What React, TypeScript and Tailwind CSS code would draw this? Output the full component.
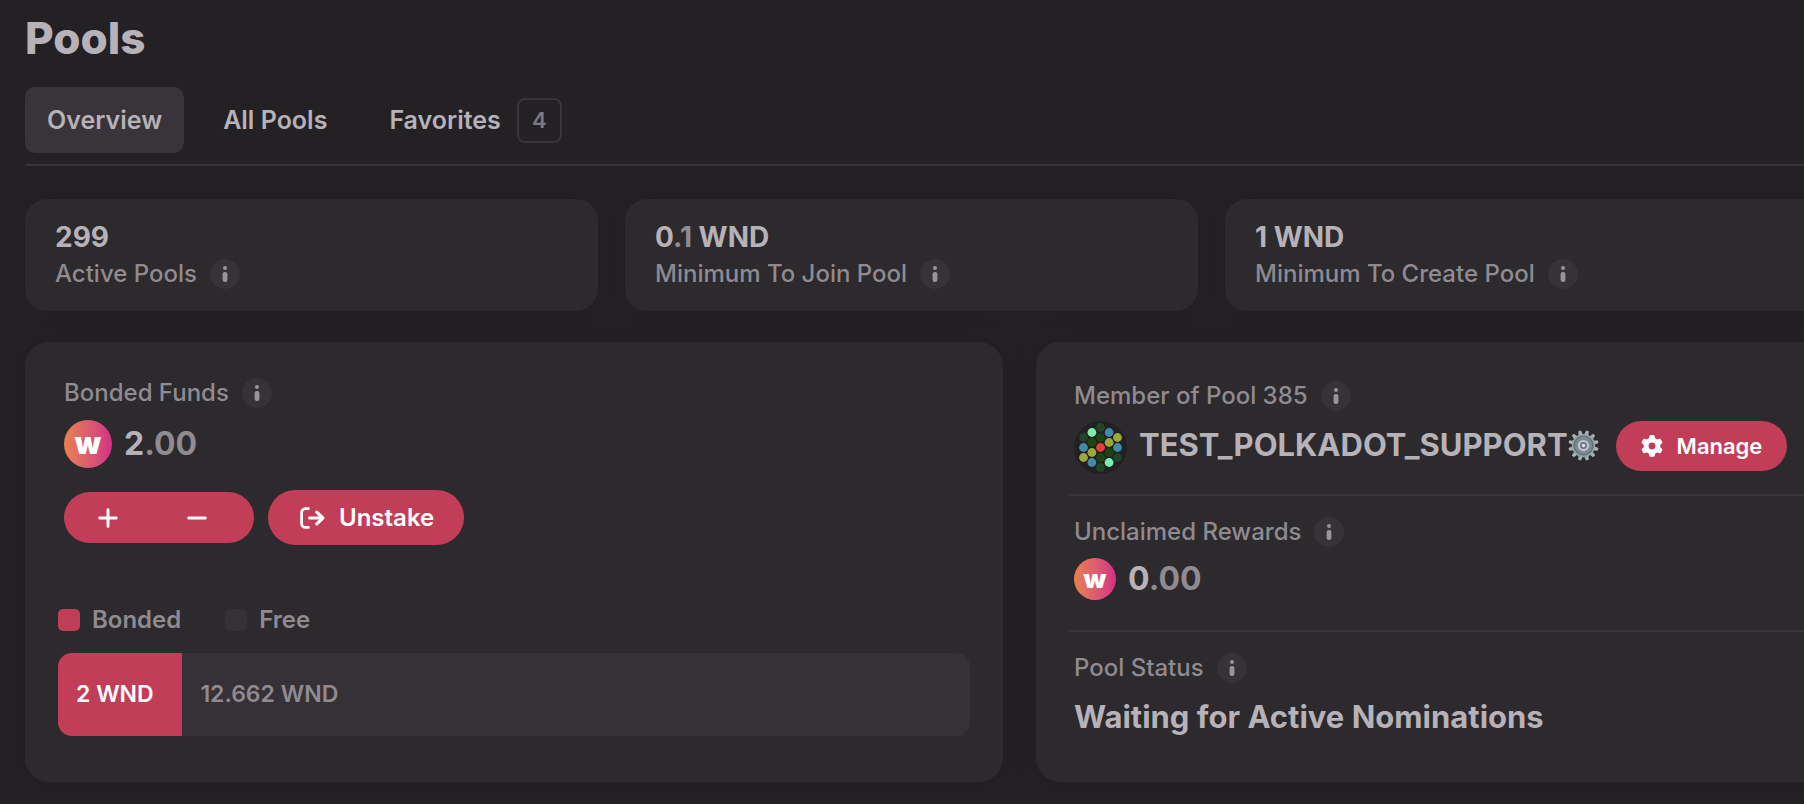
import { FaGear, FaMinus, FaPlus } from "react-icons/fa6";

const bonded = 2;
const free = 12.662;

const stats = [
  { whole: "299", decimals: "", unit: "", label: "Active Pools" },
  { whole: "0", decimals: ".1", unit: " WND", label: "Minimum To Join Pool" },
  { whole: "1", decimals: "", unit: " WND", label: "Minimum To Create Pool" },
];

const identiconDots = [
  [-17, -10, "#204527"],
  [-17, 0, "#4389a9"],
  [-17, 10, "#9ea838"],
  [-8.6, -15, "#78f0ac"],
  [-8.6, -5, "#1e4511"],
  [-8.6, 5, "#9ea838"],
  [-8.6, 15, "#4389a9"],
  [0, -20, "#204527"],
  [0, -10, "#1e4511"],
  [0, 0, "#e63c3c"],
  [0, 10, "#1e4511"],
  [0, 20, "#204527"],
  [8.6, -15, "#4389a9"],
  [8.6, -5, "#9ea838"],
  [8.6, 5, "#1e4511"],
  [8.6, 15, "#78f0ac"],
  [17, -10, "#9ea838"],
  [17, 0, "#4389a9"],
  [17, 10, "#204527"],
] as const;

const gearTeeth = [15, 45, 75, 105, 135, 165, 195, 225, 255, 285, 315, 345];

function InfoButton({ label }: { label: string }) {
  return (
    <button
      type="button"
      aria-label={`About ${label}`}
      className="flex size-[30px] shrink-0 items-center justify-center rounded-full bg-[#373238] text-[#98949b]"
    >
      <svg className="h-4 w-[6px]" viewBox="0 0 6 16" fill="currentColor">
        <circle cx="3" cy="2" r="2" />
        <rect x="0.6" y="6" width="4.8" height="10" rx="2.2" />
      </svg>
    </button>
  );
}

function Label({ text }: { text: string }) {
  return (
    <div className="flex items-center gap-[13px]">
      <h4 className="text-2xl leading-[30px] font-[550] text-[#8f8b91]">{text}</h4>
      <InfoButton label={text} />
    </div>
  );
}

function TokenLogo({ className }: { className: string }) {
  return (
    <span
      className={`flex shrink-0 items-center justify-center rounded-full bg-linear-to-r from-[#e8804f] to-[#d22f83] pb-[2px] font-black text-white ${className}`}
    >
      w
    </span>
  );
}

function Identicon() {
  return (
    <svg className="size-[53px] shrink-0" viewBox="-26.5 -26.5 53 53">
      <circle r="26.5" fill="#222023" />
      {identiconDots.map(([x, y, fill]) => (
        <circle key={`${x},${y}`} cx={x} cy={y} r="4.4" fill={fill} />
      ))}
    </svg>
  );
}

function SteelGear() {
  return (
    <svg className="size-[31px] shrink-0" viewBox="-16 -16 32 32">
      {gearTeeth.map((angle) => (
        <path key={angle} d="M-2.2 -11 L-1.5 -15.6 H1.5 L2.2 -11 Z" fill="#a3b1bb" transform={`rotate(${angle})`} />
      ))}
      <circle r="12" fill="#95a2ac" />
      <circle r="10.4" fill="#5f6a73" />
      <circle r="9.2" fill="#7d8891" />
      <circle r="5.8" fill="#bcc9d2" />
      <circle r="3.6" fill="#6b7680" />
      <circle r="1.7" fill="#dbe4ea" />
    </svg>
  );
}

function LeaveIcon() {
  return (
    <svg
      className="h-[22px] w-[25px] shrink-0"
      viewBox="0 0 25 22"
      fill="none"
      stroke="currentColor"
      strokeWidth="2.8"
      strokeLinecap="round"
      strokeLinejoin="round"
    >
      <path d="M8.4 1.6H5.6a4 4 0 0 0-4 4v10.8a4 4 0 0 0 4 4h2.8" />
      <path d="M9.4 11h13" />
      <path d="M16.8 5.2 22.8 11l-6 5.8" strokeWidth="3.2" />
    </svg>
  );
}

export default function App() {
  return (
    <main className="min-h-screen overflow-x-hidden bg-[#232124] pl-[25px] font-['Inter',sans-serif] text-[#b6b2b8]">
      {/* HEADER */}
      <h1 className="pt-[11px] text-[44px] leading-[55px] font-extrabold">Pools</h1>
      <nav className="mt-[21px] flex items-center gap-4 border-b-2 border-[#38353a] pb-[11px] text-[25px] font-semibold">
        <button type="button" className="h-[66px] rounded-[10px] bg-[#39343a] px-[22px] pt-[2px]">
          Overview
        </button>
        <button type="button" className="h-[66px] px-[23px] pt-[2px]">
          All Pools
        </button>
        <button type="button" className="flex h-[66px] items-center gap-4 px-[23px]">
          <span className="pt-[2px]">Favorites</span>
          <span className="flex size-[45px] items-center justify-center rounded-lg border-2 border-[#38353a] text-[22px] font-semibold text-[#7d797f]">
            4
          </span>
        </button>
      </nav>

      {/* STATS */}
      <section className="mt-[33px] -mr-8 flex gap-[27px]">
        {stats.map((stat) => (
          <div
            key={stat.label}
            className="min-w-0 shrink-0 basis-[573px] rounded-[22px] bg-[#2c2a2d] px-[30px] pt-[21px] pb-[22px] shadow-[0_0_20px_rgba(0,0,0,0.08)] last:grow"
          >
            <h3 className="text-[28px] leading-[34px] font-[650]">
              {stat.whole}
              <span className="text-[#8f8b91]">{stat.decimals}</span>
              {stat.unit}
            </h3>
            <div className="mt-[5px]">
              <Label text={stat.label} />
            </div>
          </div>
        ))}
      </section>

      {/* CARDS */}
      <section className="mt-[31px] -mr-8 grid grid-cols-[978fr_800fr] gap-[33px] pb-[22px]">
        <div className="flex flex-col rounded-3xl bg-[#2c2a2d] px-[33px] pt-9 pb-[46px] shadow-[0_0_28px_rgba(0,0,0,0.12)]">
          <div className="px-[6px]">
            <Label text="Bonded Funds" />
            <div className="mt-3 flex items-center gap-3">
              <TokenLogo className="size-12 text-[30px]" />
              <h2 className="text-[32px] leading-[48px] font-bold">
                2<span className="text-[#8f8b91]">.00</span>
              </h2>
            </div>
            <div className="mt-[22px] flex items-center gap-[14px] text-white">
              <div className="flex h-[51px] w-[190px] rounded-full bg-[#c23d58]">
                <button type="button" aria-label="Bond more" className="flex w-[88px] items-center justify-center">
                  <FaPlus className="size-6" />
                </button>
                <button type="button" aria-label="Unbond" className="flex w-[90px] items-center justify-center">
                  <FaMinus className="size-6" />
                </button>
              </div>
              <button
                type="button"
                className="flex h-[55px] items-center gap-[14px] rounded-full bg-[#c23d58] pr-[30px] pl-8 text-2xl font-semibold"
              >
                <LeaveIcon />
                Unstake
              </button>
            </div>
          </div>

          <div className="mt-[60px] flex gap-[44px] text-2xl leading-[30px] font-semibold text-[#8f8b91]">
            <div className="flex items-center gap-3">
              <span className="size-[22px] rounded-[5px] bg-[#c23d58]"></span>
              Bonded
            </div>
            <div className="flex items-center gap-3">
              <span className="size-[22px] rounded-[5px] bg-[#363136]"></span>
              Free
            </div>
          </div>
          <div className="mt-[18px] flex h-[83px] overflow-hidden rounded-[14px] bg-[#363136] text-[23px] font-semibold">
            <div
              className="flex items-center bg-[#c23d58] pl-[18px] whitespace-nowrap text-white"
              style={{ width: `${(bonded / (bonded + free)) * 100}%` }}
            >
              {bonded} WND
            </div>
            <div className="flex items-center pl-[18px] text-[#8f8b91]">{free} WND</div>
          </div>
        </div>

        <div className="rounded-3xl bg-[#2c2a2d] py-[18px] pl-[33px] shadow-[0_0_28px_rgba(0,0,0,0.12)]">
          <div className="h-[136px] border-b-2 border-[#38353a] pt-[21px] pl-[5px]">
            <Label text="Member of Pool 385" />
            <div className="mt-[10px] flex items-start">
              <Identicon />
              <h2 className="ml-3 flex items-center text-[31px] leading-[48px] font-[650]">
                TEST_POLKADOT_SUPPORT
                <SteelGear />
              </h2>
              <button
                type="button"
                className="ml-[17px] flex h-[50px] items-center gap-[14px] rounded-full bg-[#c23d58] px-[25px] text-[22px] font-semibold text-white"
              >
                <FaGear className="size-[22px]" />
                Manage
              </button>
            </div>
          </div>
          <div className="h-[136px] border-b-2 border-[#38353a] pt-[21px] pl-[5px]">
            <Label text="Unclaimed Rewards" />
            <div className="mt-2 flex items-center gap-3">
              <TokenLogo className="size-[42px] text-[26px]" />
              <h2 className="text-[32px] leading-[48px] font-bold">
                0<span className="text-[#8f8b91]">.00</span>
              </h2>
            </div>
          </div>
          <div className="pt-[21px] pl-[5px]">
            <Label text="Pool Status" />
            <h2 className="mt-[10px] text-[31px] leading-[48px] font-[650]">Waiting for Active Nominations</h2>
          </div>
        </div>
      </section>
    </main>
  );
}
